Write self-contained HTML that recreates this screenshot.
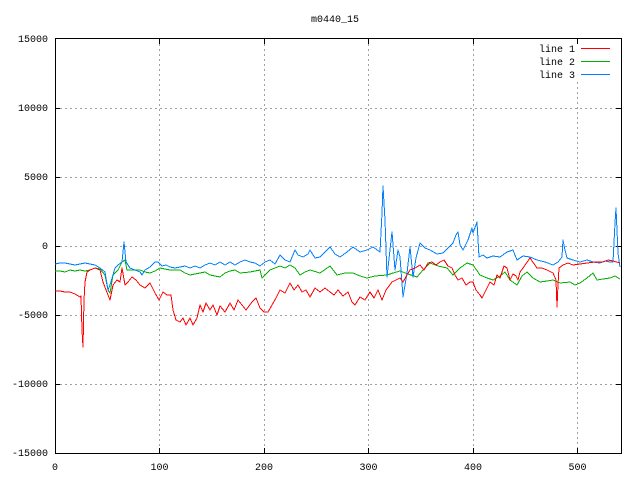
<!DOCTYPE html>
<html><head><style>html,body{margin:0;padding:0;background:#fff}svg{display:block}text{font-family:"Liberation Mono",monospace;font-size:10px;fill:#000}</style></head><body>
<svg width="640" height="480" xmlns="http://www.w3.org/2000/svg" shape-rendering="crispEdges">
<rect width="640" height="480" fill="#fff"/>
<g stroke="#a0a0a0" stroke-dasharray="2,3" stroke-width="1">
<line x1="159.5" y1="39" x2="159.5" y2="453"/><line x1="264.5" y1="39" x2="264.5" y2="453"/><line x1="368.5" y1="39" x2="368.5" y2="453"/><line x1="473.5" y1="39" x2="473.5" y2="453"/><line x1="577.5" y1="82" x2="577.5" y2="453"/>
<line x1="55" y1="108.5" x2="621" y2="108.5"/><line x1="55" y1="177.5" x2="621" y2="177.5"/><line x1="55" y1="246.5" x2="621" y2="246.5"/><line x1="55" y1="315.5" x2="621" y2="315.5"/><line x1="55" y1="384.5" x2="621" y2="384.5"/>
</g>
<rect x="55.5" y="38.5" width="566" height="415" fill="none" stroke="#000"/>
<g stroke="#000"><line x1="159.5" y1="39" x2="159.5" y2="44"/><line x1="264.5" y1="39" x2="264.5" y2="44"/><line x1="368.5" y1="39" x2="368.5" y2="44"/><line x1="473.5" y1="39" x2="473.5" y2="44"/><line x1="577.5" y1="39" x2="577.5" y2="44"/>
<line x1="159.5" y1="453" x2="159.5" y2="448"/><line x1="264.5" y1="453" x2="264.5" y2="448"/><line x1="368.5" y1="453" x2="368.5" y2="448"/><line x1="473.5" y1="453" x2="473.5" y2="448"/><line x1="577.5" y1="453" x2="577.5" y2="448"/>
<line x1="55" y1="108.5" x2="60" y2="108.5"/><line x1="55" y1="177.5" x2="60" y2="177.5"/><line x1="55" y1="246.5" x2="60" y2="246.5"/><line x1="55" y1="315.5" x2="60" y2="315.5"/><line x1="55" y1="384.5" x2="60" y2="384.5"/>
<line x1="621" y1="108.5" x2="616" y2="108.5"/><line x1="621" y1="177.5" x2="616" y2="177.5"/><line x1="621" y1="246.5" x2="616" y2="246.5"/><line x1="621" y1="315.5" x2="616" y2="315.5"/><line x1="621" y1="384.5" x2="616" y2="384.5"/></g>
<text x="335" y="22" text-anchor="middle">m0440_15</text>
<g text-anchor="end"><text x="48" y="42">15000</text><text x="48" y="111">10000</text><text x="48" y="180">5000</text><text x="48" y="249">0</text><text x="48" y="318">-5000</text><text x="48" y="387">-10000</text><text x="48" y="456">-15000</text></g>
<g text-anchor="middle"><text x="55" y="470">0</text><text x="159.5" y="470">100</text><text x="264" y="470">200</text><text x="368.5" y="470">300</text><text x="473" y="470">400</text><text x="577.5" y="470">500</text></g>
<g text-anchor="end"><text x="575" y="52">line 1</text><text x="575" y="65">line 2</text><text x="575" y="78">line 3</text></g>
<line x1="581" y1="48.5" x2="610" y2="48.5" stroke="#ff0000"/><line x1="581" y1="61.5" x2="610" y2="61.5" stroke="#00b000"/><line x1="581" y1="74.5" x2="610" y2="74.5" stroke="#0080ff"/>
<g fill="none" stroke-width="1" stroke-linejoin="round">
<polyline stroke="#00b000" points="55,271 60,271 65,272 70,270 75,271 80,270 85,271 90,270 95,268 100,269 105,275 108,290 110,293 113,275 118,270 122,262 125,260 127,270 130,270 135,270 140,270 145,272 150,273 155,271 160,268 170,270 180,270 185,273 190,275 200,273 205,272 210,275 220,277 225,273 230,271 235,270 240,273 250,272 260,270 262,278 265,275 270,270 275,268 280,266 285,268 290,265 295,268 300,275 305,272 310,270 320,273 330,266 337,275 345,273 353,273 360,276 367,278 375,276 387,275 393,273 400,271 408,274 417,277 423,270 430,263 438,266 447,268 453,275 460,268 467,263 473,265 480,275 487,278 493,280 500,276 505,272 510,280 517,285 522,276 527,272 533,278 540,282 547,281 553,280 560,283 570,282 575,285 580,283 587,278 593,273 597,280 603,279 610,278 615,276 620,279"/>
<polyline stroke="#0080ff" points="55,264 60,263 65,263 70,264 75,265 80,264 85,263 90,264 95,265 100,268 105,272 108,290 110,285 115,268 118,265 122,262 124,242 126,262 130,268 135,270 140,272 142,275 145,270 150,267 155,262 158,262 162,266 166,265 170,267 175,268 180,267 185,266 190,268 195,266 200,268 205,265 210,263 215,265 220,262 225,265 230,262 235,265 240,262 245,260 250,262 255,263 260,266 265,262 270,260 275,264 280,255 285,260 290,262 295,250 298,255 303,257 308,254 310,250 315,258 320,257 325,252 330,247 335,254 340,257 347,252 353,247 360,252 367,250 373,247 380,252 382,213 383,186 385,220 387,277 390,250 392,232 395,270 398,250 400,257 403,297 405,285 407,273 410,247 413,277 416,258 420,243 425,248 430,250 437,254 443,253 448,248 453,243 456,235 458,232 460,245 463,250 468,240 472,228 473,233 477,222 479,257 483,255 487,258 493,256 500,257 507,252 513,250 517,260 523,256 530,257 537,260 545,262 553,265 558,262 562,257 563,240 565,250 567,258 573,260 580,262 587,260 593,262 600,263 605,261 610,262 613,262 615,223 616,208 618,253 620,267"/>
<polyline stroke="#ff0000" points="55,291 60,291 65,292 70,292 75,294 80,297 81,296 82,330 83,347 84,300 85,282 87,272 90,270 95,268 100,270 103,282 108,295 110,300 113,285 117,280 120,282 122,268 125,285 128,282 132,277 136,280 140,285 145,288 150,283 155,293 159,300 163,292 167,295 171,295 173,310 176,320 180,322 183,318 186,325 190,318 193,325 197,318 200,305 203,312 206,303 210,310 213,305 217,315 220,306 225,312 230,303 234,310 238,300 242,305 246,310 252,302 256,298 260,308 264,312 268,312 272,305 276,298 280,290 285,293 290,283 294,290 298,285 302,292 306,290 310,297 315,288 320,292 325,288 330,292 334,295 338,290 343,296 348,292 352,302 355,305 360,297 365,300 370,292 374,298 378,290 382,300 386,290 392,282 396,280 400,278 403,282 407,275 410,270 415,268 420,265 424,270 428,263 432,262 436,265 440,262 444,260 448,266 452,268 455,275 458,280 462,278 466,285 470,282 473,282 476,290 480,295 482,298 485,292 490,282 494,285 497,275 500,278 504,266 507,268 510,280 513,274 516,276 518,280 520,272 523,268 530,258 537,268 542,268 547,270 553,273 556,280 557,307 558,285 559,268 563,265 568,263 573,265 580,264 587,263 595,262 603,262 608,260 613,261 620,263"/>
</g>
</svg>
</body></html>
